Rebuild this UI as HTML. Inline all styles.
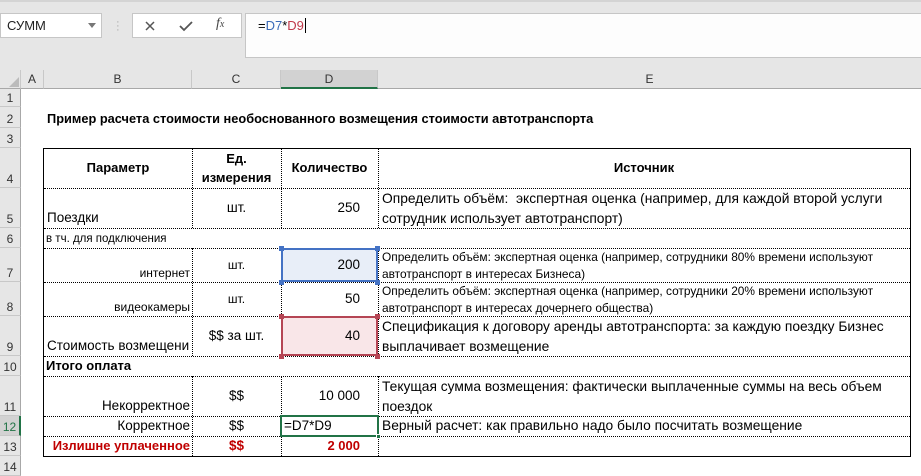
<!DOCTYPE html>
<html><head><meta charset="utf-8"><style>
*{margin:0;padding:0;box-sizing:border-box}
body{width:921px;height:475px;overflow:hidden;background:#fff;font-family:"Liberation Sans","DejaVu Sans",sans-serif;position:relative;color:#000}
.a{position:absolute;white-space:nowrap}
.c{position:absolute;display:flex;padding:0 3px;font-size:13.5px;line-height:20px;white-space:nowrap;overflow:hidden}
.hd{position:absolute;top:70px;height:19px;background:#e6e6e6;border-right:1px solid #c8c8c8;border-bottom:1px solid #a8a8a8;font-size:12px;text-align:center;line-height:19px;color:#333}
.rn{position:absolute;left:0;width:21px;background:#e6e6e6;border-bottom:1px solid #c8c8c8;border-right:1px solid #a8a8a8;font-size:12px;color:#333;display:flex;align-items:flex-end;justify-content:center;padding-bottom:1px}
.hl{position:absolute;border-top:1px dotted #000;height:0}
.vl{position:absolute;border-left:1px dotted #000;width:0}
.b{font-weight:bold}
</style></head><body>
<div class="a" style="left:0;top:0;width:921px;height:70px;background:#e6e6e6;border-top:2px solid #d4d4d4"></div>
<div class="a" style="left:0;top:13px;width:102px;height:25px;background:#fff;border:1px solid #c6c6c6;font-size:13px;line-height:23px;padding-left:6px;color:#222">СУММ</div>
<div class="a" style="left:88px;top:23px;width:0;height:0;border-left:4px solid transparent;border-right:4px solid transparent;border-top:5px solid #777"></div>
<div class="a" style="left:116px;top:20px;color:#aaa;font-size:11px;line-height:4px">·<br>·<br>·</div>
<div class="a" style="left:132px;top:13px;width:110px;height:25px;background:#fff;border:1px solid #c6c6c6"></div>
<svg class="a" style="left:143px;top:19px" width="14" height="14"><path d="M3 3L11 11M11 3L3 11" stroke="#555" stroke-width="1.5"/></svg>
<svg class="a" style="left:178px;top:19px" width="16" height="14"><path d="M2 7L6 11L14 3" stroke="#555" stroke-width="1.8" fill="none"/></svg>
<div class="a" style="left:216px;top:16px;font-family:'Liberation Serif',serif;font-style:italic;font-size:14px;color:#444">f<span style="font-size:10px">x</span></div>
<div class="a" style="left:245px;top:13px;width:676px;height:45px;background:#fdfdfd;border:1px solid #c6c6c6;border-right:none;font-size:13px;line-height:23px;padding-left:12px">=<span style="color:#3b6bb8">D7</span>*<span style="color:#c0394b">D9</span><span style="display:inline-block;width:1px;height:15px;background:#000;vertical-align:-3px;margin-left:1px"></span></div>
<div class="hd" style="left:0;width:21px"></div>
<svg class="a" style="left:8px;top:76px" width="12" height="12"><path d="M11 1L11 11L1 11Z" fill="#bbb"/></svg>
<div class="hd" style="left:21px;width:23px">A</div>
<div class="hd" style="left:44px;width:148px">B</div>
<div class="hd" style="left:192px;width:89px">C</div>
<div class="hd" style="left:281px;width:97px;background:#d2d2d2;border-bottom:2px solid #217346">D</div>
<div class="hd" style="left:378px;width:543px;border-right:none">E</div>
<div class="rn" style="top:89px;height:18px">1</div>
<div class="rn" style="top:107px;height:21px">2</div>
<div class="rn" style="top:128px;height:20px">3</div>
<div class="rn" style="top:148px;height:40px">4</div>
<div class="rn" style="top:188px;height:40px">5</div>
<div class="rn" style="top:228px;height:20px">6</div>
<div class="rn" style="top:248px;height:34px">7</div>
<div class="rn" style="top:282px;height:34px">8</div>
<div class="rn" style="top:316px;height:40px">9</div>
<div class="rn" style="top:356px;height:20px">10</div>
<div class="rn" style="top:376px;height:40px">11</div>
<div class="rn" style="top:416px;height:20px;background:#d2d2d2;color:#217346;border-right:2px solid #217346">12</div>
<div class="rn" style="top:436px;height:20px">13</div>
<div class="rn" style="top:456px;height:20px">14</div>
<div class="a b" style="left:47px;top:111px;font-size:12.8px">Пример расчета стоимости необоснованного возмещения стоимости автотранспорта</div>
<div class="a" style="left:281px;top:248px;width:97px;height:34px;background:#e8eef8"></div>
<div class="a" style="left:281px;top:316px;width:97px;height:40px;background:#f9e6e8"></div>
<div class="hl" style="left:44px;width:866px;top:188px"></div>
<div class="hl" style="left:44px;width:866px;top:228px"></div>
<div class="hl" style="left:44px;width:866px;top:248px"></div>
<div class="hl" style="left:44px;width:866px;top:282px"></div>
<div class="hl" style="left:44px;width:866px;top:316px"></div>
<div class="hl" style="left:44px;width:866px;top:356px"></div>
<div class="hl" style="left:44px;width:866px;top:376px"></div>
<div class="hl" style="left:44px;width:866px;top:416px"></div>
<div class="hl" style="left:44px;width:866px;top:436px"></div>
<div class="vl" style="left:192px;top:148px;height:80px"></div>
<div class="vl" style="left:281px;top:148px;height:80px"></div>
<div class="vl" style="left:378px;top:148px;height:80px"></div>
<div class="vl" style="left:192px;top:248px;height:108px"></div>
<div class="vl" style="left:281px;top:248px;height:108px"></div>
<div class="vl" style="left:378px;top:248px;height:108px"></div>
<div class="vl" style="left:192px;top:376px;height:80px"></div>
<div class="vl" style="left:281px;top:376px;height:80px"></div>
<div class="vl" style="left:378px;top:376px;height:80px"></div>
<div class="a" style="left:43px;top:148px;width:868px;height:309px;border:1px solid #000"></div>
<div class="a" style="left:281px;top:248px;width:97px;height:34px;border:2px solid #4472c4"></div>
<div class="a" style="left:279px;top:246px;width:5px;height:5px;background:#4472c4"></div>
<div class="a" style="left:375px;top:246px;width:5px;height:5px;background:#4472c4"></div>
<div class="a" style="left:279px;top:280px;width:5px;height:5px;background:#4472c4"></div>
<div class="a" style="left:375px;top:280px;width:5px;height:5px;background:#4472c4"></div>
<div class="a" style="left:281px;top:316px;width:97px;height:40px;border:2px solid #b54554"></div>
<div class="a" style="left:279px;top:314px;width:5px;height:5px;background:#b54554"></div>
<div class="a" style="left:375px;top:314px;width:5px;height:5px;background:#b54554"></div>
<div class="a" style="left:279px;top:354px;width:5px;height:5px;background:#b54554"></div>
<div class="a" style="left:375px;top:354px;width:5px;height:5px;background:#b54554"></div>
<div class="a" style="left:280px;top:415px;width:99px;height:22px;border:2px solid #217346"></div>
<div class="a" style="left:376px;top:434px;width:5px;height:5px;background:#217346;border:1px solid #fff"></div>
<div class="c b" style="left:44px;top:148px;width:148px;height:40px;align-items:center;justify-content:center;font-size:13px">Параметр</div>
<div class="c b" style="left:192px;top:148px;width:89px;height:40px;align-items:center;justify-content:center;font-size:13px;text-align:center;line-height:19px;white-space:normal">Ед. измерения</div>
<div class="c b" style="left:281px;top:148px;width:97px;height:40px;align-items:center;justify-content:center;font-size:13px">Количество</div>
<div class="c b" style="left:378px;top:148px;width:532px;height:40px;align-items:center;justify-content:center;font-size:13px">Источник</div>
<div class="c" style="left:44px;top:188px;width:148px;height:40px;align-items:flex-end">Поездки</div>
<div class="c" style="left:192px;top:188px;width:89px;height:40px;align-items:center;justify-content:center">шт.</div>
<div class="c" style="left:281px;top:188px;width:97px;height:40px;align-items:center;justify-content:flex-end;padding-right:18px">250</div>
<div class="a" style="left:382px;top:189px;font-size:13.8px;line-height:20px">Определить объём:&nbsp; экспертная оценка (например, для каждой второй услуги<br>сотрудник использует автотранспорт)</div>
<div class="a" style="left:46px;top:233px;font-size:11.5px">в тч. для подключения</div>
<div class="c" style="left:44px;top:248px;width:148px;height:34px;align-items:flex-end;justify-content:flex-end;font-size:12px;line-height:17px;padding-right:2px">интернет</div>
<div class="c" style="left:192px;top:248px;width:89px;height:34px;align-items:center;justify-content:center;font-size:12px">шт.</div>
<div class="c" style="left:281px;top:248px;width:97px;height:34px;align-items:center;justify-content:flex-end;padding-right:18px">200</div>
<div class="a" style="left:382px;top:249px;font-size:11.9px;line-height:17px">Определить объём: экспертная оценка (например, сотрудники 80% времени используют<br>автотранспорт в интересах Бизнеса)</div>
<div class="c" style="left:44px;top:282px;width:148px;height:34px;align-items:flex-end;justify-content:flex-end;font-size:12px;line-height:17px;padding-right:2px">видеокамеры</div>
<div class="c" style="left:192px;top:282px;width:89px;height:34px;align-items:center;justify-content:center;font-size:12px">шт.</div>
<div class="c" style="left:281px;top:282px;width:97px;height:34px;align-items:center;justify-content:flex-end;padding-right:18px">50</div>
<div class="a" style="left:382px;top:283px;font-size:11.9px;line-height:17px">Определить объём: экспертная оценка (например, сотрудники 20% времени используют<br>автотранспорт в интересах дочернего общества)</div>
<div class="c" style="left:44px;top:316px;width:148px;height:40px;align-items:flex-end">Стоимость возмещени</div>
<div class="c" style="left:192px;top:316px;width:89px;height:40px;align-items:center;justify-content:center">$$ за шт.</div>
<div class="c" style="left:281px;top:316px;width:97px;height:40px;align-items:center;justify-content:flex-end;padding-right:18px">40</div>
<div class="a" style="left:382px;top:317px;font-size:13.8px;line-height:20px">Спецификация к договору аренды автотранспорта: за каждую поездку Бизнес<br>выплачивает возмещение</div>
<div class="a b" style="left:46px;top:358px;font-size:13px">Итого оплата</div>
<div class="c" style="left:44px;top:376px;width:148px;height:40px;align-items:flex-end;justify-content:flex-end;padding-right:2px">Некорректное</div>
<div class="c" style="left:192px;top:376px;width:89px;height:40px;align-items:center;justify-content:center">$$</div>
<div class="c" style="left:281px;top:376px;width:97px;height:40px;align-items:center;justify-content:flex-end;padding-right:18px">10 000</div>
<div class="a" style="left:382px;top:377px;font-size:13.8px;line-height:20px">Текущая сумма возмещения: фактически выплаченные суммы на весь объем<br>поездок</div>
<div class="c" style="left:44px;top:416px;width:148px;height:20px;justify-content:flex-end;padding-right:2px">Корректное</div>
<div class="c" style="left:192px;top:416px;width:89px;height:20px;justify-content:center">$$</div>
<div class="c" style="left:281px;top:416px;width:97px;height:20px">=D7*D9</div>
<div class="a" style="left:382px;top:416px;font-size:13.8px;line-height:20px">Верный расчет: как правильно надо было посчитать возмещение</div>
<div class="c b" style="left:44px;top:436px;width:148px;height:20px;justify-content:flex-end;padding-right:2px;color:#c00000;font-size:13px">Излишне уплаченное</div>
<div class="c b" style="left:192px;top:436px;width:89px;height:20px;justify-content:center;color:#c00000">$$</div>
<div class="c b" style="left:281px;top:436px;width:97px;height:20px;justify-content:flex-end;padding-right:18px;color:#c00000;font-size:13px">2 000</div>
</body></html>
